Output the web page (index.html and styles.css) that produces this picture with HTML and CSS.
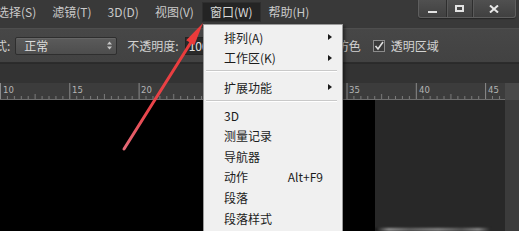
FILE: index.html
```html
<!DOCTYPE html>
<html lang="zh-CN">
<head>
<meta charset="utf-8">
<title>Photoshop 窗口菜单</title>
<link rel="stylesheet" href="styles.css">
</head>
<body>
<div class="app">
  <div class="menubar">
    <span class="mi first">选择(S)</span>
    <span class="mi">滤镜(T)</span>
    <span class="mi">3D(D)</span>
    <span class="mi">视图(V)</span>
    <span class="mi active">窗口(W)</span>
    <span class="mi">帮助(H)</span>
    <div class="winctl">
      <span class="wb wb-min"><i class="ic-min"></i></span>
      <span class="wb wb-max"><i class="ic-max"></i></span>
      <span class="wb wb-close"><svg width="10" height="8" viewBox="0 0 10 8"><path d="M1 0.5 L9 7.5 M9 0.5 L1 7.5" stroke="#e8e8e8" stroke-width="2"/></svg></span>
    </div>
  </div>

  <div class="toolbar">
    <span class="lbl mode">模式:</span>
    <div class="select">
      <span>正常</span>
      <svg class="updown" width="5" height="9" viewBox="0 0 5 9"><path d="M0 3.5 L2.5 0.5 L5 3.5Z M0 5.5 L2.5 8.5 L5 5.5Z" fill="#c8c8c8"/></svg>
    </div>
    <span class="lbl opacity">不透明度:</span>
    <div class="input">100%</div>
    <label class="chk chk-rev"><span class="box"></span>反向</label>
    <label class="chk chk-dither"><span class="box"><svg width="10" height="10" viewBox="0 0 10 10"><path d="M1.5 5 L4 8 L9 1" stroke="#e0e0e0" stroke-width="1.6" fill="none"/></svg></span>仿色</label>
    <label class="chk chk-trans"><span class="box"><svg width="10" height="10" viewBox="0 0 10 10"><path d="M1.5 5 L4 8 L9 1" stroke="#e0e0e0" stroke-width="1.6" fill="none"/></svg></span>透明区域</label>
  </div>

  <div class="tabband"></div>

  <div class="rulerrow">
    <svg class="ruler" width="505" height="17" viewBox="0 0 505 17">
      <defs>
        <pattern id="ticks" patternUnits="userSpaceOnUse" width="69.3" height="17">
          <rect x="0" y="0" width="1" height="17" fill="#8a8a8a"/>
          <rect x="6.9" y="13" width="1" height="3" fill="#7a7a7a"/>
          <rect x="13.9" y="13" width="1" height="3" fill="#7a7a7a"/>
          <rect x="20.8" y="13" width="1" height="3" fill="#7a7a7a"/>
          <rect x="27.7" y="13" width="1" height="3" fill="#7a7a7a"/>
          <rect x="34.6" y="11" width="1" height="5" fill="#7a7a7a"/>
          <rect x="41.6" y="13" width="1" height="3" fill="#7a7a7a"/>
          <rect x="48.5" y="13" width="1" height="3" fill="#7a7a7a"/>
          <rect x="55.4" y="13" width="1" height="3" fill="#7a7a7a"/>
          <rect x="62.4" y="13" width="1" height="3" fill="#7a7a7a"/>
        </pattern>
      </defs>
      <rect x="0" y="0" width="505" height="17" fill="url(#ticks)"/>
      <rect x="0" y="16" width="505" height="1" fill="#6e6e6e"/>
      <g class="rnum">
        <text x="3" y="10">10</text>
        <text x="72" y="10">15</text>
        <text x="141" y="10">20</text>
        <text x="211" y="10">25</text>
        <text x="280" y="10">30</text>
        <text x="349" y="10">35</text>
        <text x="419" y="10">40</text>
        <text x="488" y="10">45</text>
      </g>
    </svg>
    <div class="rul-end"></div>
  </div>

  <div class="work">
    <div class="canvas"></div>
    <div class="paste"><div class="noise"></div></div>
    <div class="strip"></div>
  </div>

  <div class="dropdown">
    <div class="dd-item">排列(A)<span class="tri"></span></div>
    <div class="dd-item">工作区(K)<span class="tri"></span></div>
    <div class="dd-sep"></div>
    <div class="dd-item">扩展功能<span class="tri"></span></div>
    <div class="dd-sep sep2"></div>
    <div class="dd-item">3D</div>
    <div class="dd-item">测量记录</div>
    <div class="dd-item">导航器</div>
    <div class="dd-item">动作<span class="key">Alt+F9</span></div>
    <div class="dd-item">段落</div>
    <div class="dd-item">段落样式</div>
  </div>

  <svg class="arrow" width="519" height="231" viewBox="0 0 519 231">
    <defs>
      <linearGradient id="shaft" x1="124" y1="149" x2="190" y2="43" gradientUnits="userSpaceOnUse">
        <stop offset="0" stop-color="#e46a78"/>
        <stop offset="0.35" stop-color="#e8444a"/>
        <stop offset="1" stop-color="#ea3a3a"/>
      </linearGradient>
    </defs>
    <path d="M124 149 L191.5 41.5" stroke="url(#shaft)" stroke-width="3" stroke-linecap="round"/>
    <path d="M203 23 L194.3 45.3 L186.2 40.2 Z" fill="#eb3b3b"/>
  </svg>
</div>
</body>
</html>
```

FILE: styles.css
```css
* { box-sizing: border-box; }

html, body {
  margin: 0;
  padding: 0;
  background: #000;
}

.app {
  position: relative;
  width: 519px;
  height: 231px;
  overflow: hidden;
  display: flex;
  flex-direction: column;
  font-family: "Noto Sans CJK SC", "Noto Sans", sans-serif;
  font-size: 12px;
}

/* ---------- menu bar ---------- */
.menubar {
  display: flex;
  align-items: flex-start;
  height: 28px;
  flex: none;
  background: #393939;
}

.mi {
  margin-top: 2px;
  height: 20px;
  line-height: 20px;
  padding: 0 8px;
  color: #cacaca;
  white-space: nowrap;
}

.mi.first { margin-left: -11px; }

.mi.active {
  background: #242424;
  box-shadow: inset 0 0 0 1px #2e2e2e;
  color: #d8d8d8;
}

.winctl {
  margin-left: auto;
  margin-right: 3px;
  display: flex;
  height: 18px;
  border: 1px solid #5e5e5e;
  border-top: 0;
  border-radius: 0 0 3px 3px;
  background: linear-gradient(#505050, #404040);
  box-shadow: 0 1px 1px #262626;
}

.wb {
  display: flex;
  align-items: center;
  justify-content: center;
  border-left: 1px solid #2e2e2e;
  box-shadow: inset 1px 0 0 #5a5a5a;
}

.wb:first-child { border-left: 0; box-shadow: none; }

.wb-min { width: 27px; }
.wb-max { width: 26px; }
.wb-close { width: 43px; }

.ic-min {
  display: block;
  width: 9px;
  height: 2px;
  margin-top: 7px;
  background: #e2e2e2;
}

.ic-max {
  display: block;
  width: 9px;
  height: 7px;
  border: 2px solid #e2e2e2;
}

/* ---------- options toolbar ---------- */
.toolbar {
  display: flex;
  align-items: center;
  height: 35px;
  flex: none;
  background: linear-gradient(#474747, #424242);
  border-top: 1px solid #4e4e4e;
  border-bottom: 1px solid #2c2c2c;
  color: #d2d2d2;
  white-space: nowrap;
}

.mode { margin-left: -17px; }

.select {
  display: flex;
  align-items: center;
  justify-content: space-between;
  width: 102px;
  height: 18px;
  margin-left: 5px;
  padding: 0 4px 0 8px;
  background: linear-gradient(#5b5b5b, #4d4d4d);
  border: 1px solid #2e2e2e;
  border-radius: 2px;
  box-shadow: inset 0 1px 0 #666;
  color: #dcdcdc;
}

.opacity { margin-left: 10px; }

.input {
  width: 46px;
  height: 18px;
  margin-left: 6px;
  padding-left: 3px;
  line-height: 16px;
  background: #2a2a2a;
  border: 1px solid #232323;
  color: #e0e0e0;
}

.chk {
  display: flex;
  align-items: center;
  gap: 6px;
}

.chk-rev { margin-left: 22px; }
.chk-dither { margin-left: 24px; }
.chk-trans { margin-left: 12px; }

.box {
  display: flex;
  align-items: center;
  justify-content: center;
  width: 12px;
  height: 12px;
  border: 1px solid #8c8c8c;
  background: #3a3a3a;
}

/* ---------- document tab band / ruler ---------- */
.tabband {
  height: 20px;
  flex: none;
  background: #333333;
  border-top: 1px solid #2a2a2a;
}

.rulerrow {
  display: flex;
  height: 17px;
  flex: none;
}

.ruler {
  display: block;
  background: #3c3c3c;
}

.rnum text {
  font-family: "DejaVu Sans", sans-serif;
  font-size: 8.5px;
  fill: #b4b4b4;
}

.rul-end {
  flex: 1;
  background: #494949;
}

/* ---------- workspace ---------- */
.work {
  flex: 1;
  display: flex;
}

.canvas {
  width: 375px;
  background: #000;
}

.paste {
  flex: 1;
  display: flex;
  flex-direction: column;
  justify-content: flex-end;
  background: #282828;
}

.noise {
  height: 3px;
  margin: 0 15px 0 0;
  background: linear-gradient(90deg, #000, #bdbdbd 12%, #7a7a7a 30%, #a8a8a8 55%, #6a6a6a 75%, #b0b0b0 90%, #282828);
  filter: blur(0.8px);
  opacity: 0.75;
}

.strip {
  width: 14px;
  background: #3b3b3b;
}

/* ---------- dropdown menu (overlay) ---------- */
.dropdown {
  position: absolute;
  left: 203px;
  top: 24px;
  width: 140px;
  height: 215px;
  padding-top: 2px;
  background: #f0f0f0;
  border: 1px solid #9a9a9a;
  box-shadow: 2px 2px 3px rgba(0, 0, 0, 0.45);
  color: #1c1c1c;
  z-index: 2;
}

.dd-item {
  display: flex;
  align-items: center;
  height: 20.6px;
  padding-left: 20px;
  white-space: nowrap;
}

.tri {
  margin-left: auto;
  margin-right: 10px;
  width: 0;
  height: 0;
  border-left: 4px solid #1a1a1a;
  border-top: 3.5px solid transparent;
  border-bottom: 3.5px solid transparent;
}

.key {
  margin-left: auto;
  margin-right: 19px;
}

.dd-sep {
  height: 2px;
  margin: 2px 5px 5px 2px;
  border-top: 1px solid #c9c9c9;
  border-bottom: 1px solid #ffffff;
}

.dd-sep.sep2 { margin-bottom: 3px; }

/* ---------- annotation arrow (overlay) ---------- */
.arrow {
  position: absolute;
  left: 0;
  top: 0;
  pointer-events: none;
  z-index: 3;
}
```
